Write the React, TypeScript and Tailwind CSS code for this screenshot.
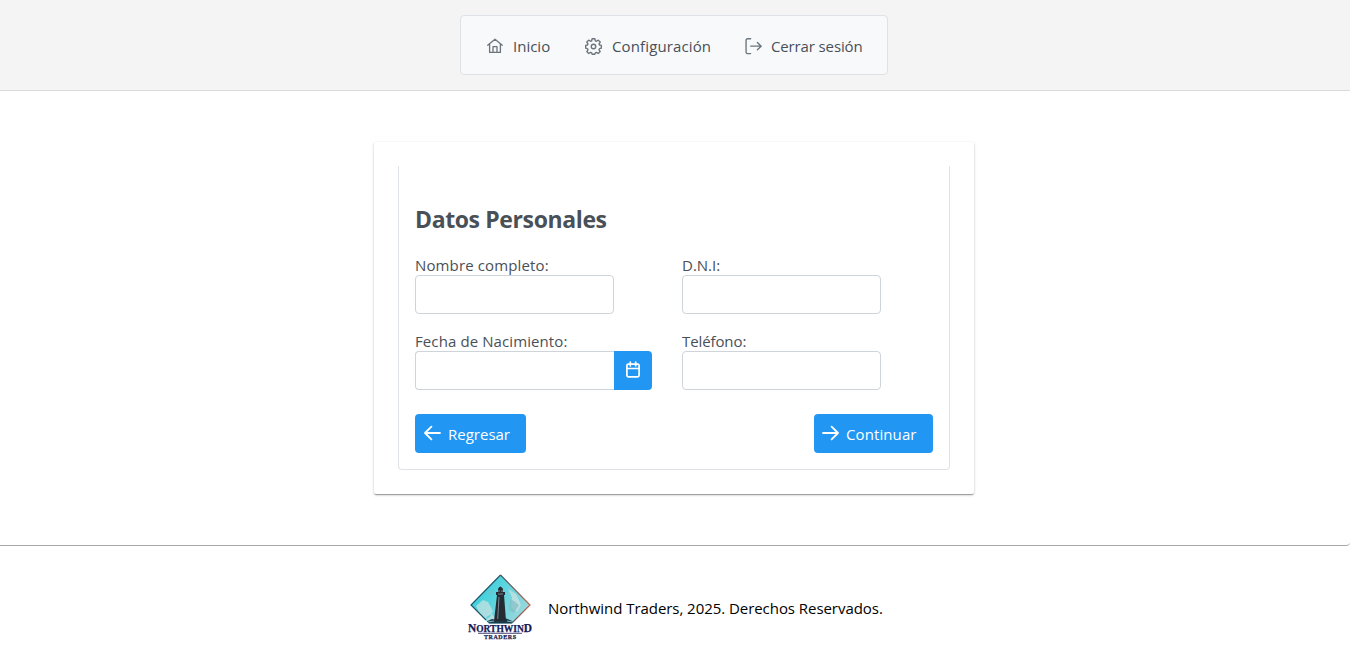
import type { ReactNode } from 'react';

function Icon({ children, className = 'size-4' }: { children: ReactNode; className?: string }) {
  return (
    <svg viewBox="0 0 16 16" fill="none" stroke="currentColor" strokeWidth="1.3" strokeLinecap="round" strokeLinejoin="round" className={`${className} shrink-0`}>
      {children}
    </svg>
  );
}

const HomeIcon = () => (
  <Icon>
    <path d="M.7 7.2 8 1.2l7.3 6M2.6 6v8.4h10.8V6M6 14.3V8.7h4v5.6" />
  </Icon>
);

const CogIcon = () => (
  <Icon className="size-[17px]">
    <path d="M6.7.7h2.6l.4 1.9 1.1.5 1.7-1.1 1.8 1.8-1.1 1.7.5 1.1 1.7.4v2.6l-1.7.4-.5 1.1 1.1 1.7-1.8 1.8-1.7-1.1-1.1.5-.4 1.3H6.7l-.4-1.3-1.1-.5-1.7 1.1-1.8-1.8 1.1-1.7-.5-1.1L.6 9.6V7l1.7-.4.5-1.1-1.1-1.7L3.5 2l1.7 1.1 1.1-.5z" />
    <circle cx="8" cy="8" r="2.1" />
  </Icon>
);

const SignOutIcon = () => (
  <Icon className="size-[17px]">
    <path d="M5.3.7H2.5C1.5.7 1 1.2 1 2.2v11c0 1 .5 1.5 1.5 1.5h2.8M5.4 7.7h9.7M11.7 4.3l3.5 3.4-3.5 3.4" />
  </Icon>
);

const CalendarIcon = () => (
  <svg viewBox="0 0 14 17" fill="none" stroke="currentColor" strokeWidth="1.7" strokeLinecap="round" strokeLinejoin="round" className="mb-[2px] h-[17px] w-[14px]">
    <rect x=".9" y="3.2" width="12.2" height="12.6" rx="1.5" />
    <path d="M1 7.5h12M4.3 1v3.8M9.7 1v3.8" />
  </svg>
);

const ArrowIcon = ({ left = false }: { left?: boolean }) => (
  <svg viewBox="0 0 17 16" fill="none" stroke="currentColor" strokeWidth="1.8" strokeLinecap="round" strokeLinejoin="round" className="mb-[2px] h-4 w-[17px] shrink-0">
    <path d={left ? 'M16 8H1.2M7.4 1.7 1 8l6.4 6.3' : 'M1 8h14.8M9.6 1.7 16 8l-6.4 6.3'} />
  </svg>
);

function Logo() {
  return (
    <svg viewBox="0 0 64 66" className="h-[66px] w-16">
      <defs>
        <linearGradient id="sky" x1="0" y1="0" x2="1" y2=".6">
          <stop offset="0" stopColor="#20cbd2" />
          <stop offset=".45" stopColor="#55d4df" />
          <stop offset="1" stopColor="#a5d8dd" />
        </linearGradient>
        <linearGradient id="edge">
          <stop offset=".4" stopColor="#205568" />
          <stop offset="1" stopColor="#bd6550" />
        </linearGradient>
        <clipPath id="diamond">
          <path d="M32.5 1 62 31 44 49.5H21L3 31z" />
        </clipPath>
      </defs>
      <g clipPath="url(#diamond)">
        <path d="M0 0h64v62H0z" fill="url(#sky)" />
        <path d="m8 32 7-6 5 2 5 9-3 6-7 4zM40 15l4 8-1 10 6 5 4-7-5-11zM24 40l-6 3 2 5 8-3z" fill="#d7e3e2" opacity=".65" />
        <path d="m42 25 4 2 5 4-5 8-5-3zM20 18l5-2-1 6z" fill="#80bdc4" opacity=".7" />
        <path d="m15 49 9-4 5 1 8-2 12 5-9 5H24z" fill="#1b3b4d" />
        <path d="m20 48 6-1M39 47l6 1" stroke="#7db8bd" />
      </g>
      <path d="M32.5 1 62 31 45 48M18 46 3 31 32.5 1" fill="none" stroke="url(#edge)" strokeWidth="1.2" />
      <path d="M30 15q2-5 5 0v3h2v3h-1l2 26H26l3-26h-1v-3h2z" fill="#242b33" />
      <path d="M31 16v2m3-2v2M31 23l-1.3 22M30 20h5" stroke="#84939c" strokeWidth=".9" />
      <text x="0" y="58" textLength="64" lengthAdjust="spacingAndGlyphs" fill="#171956" stroke="#171956" strokeWidth=".25" className="font-['Liberation_Serif',serif] text-[10px] font-bold">
        <tspan className="text-[12px]">N</tspan>ORTHWIN<tspan className="text-[12px]">D</tspan>
      </text>
      <path d="M10 59.3h44" stroke="#34346d" strokeWidth=".9" />
      <text x="16" y="65" textLength="32" fill="#24234d" stroke="#24234d" strokeWidth=".25" className="font-['Liberation_Serif',serif] text-[6px] font-bold">TRADERS</text>
    </svg>
  );
}

function Field({ label, labelClass, calendar = false }: { label: string; labelClass: string; calendar?: boolean }) {
  return (
    <div className="flex flex-col">
      <label className="flex h-[19px] flex-col whitespace-nowrap leading-[19px]">
        <span className={labelClass}>{label}</span>
      </label>
      <div className="flex h-[39px]">
        <input aria-label={label} className={`h-full w-[199px] border border-[#ced4da] bg-white px-3 outline-none ${calendar ? 'rounded-l border-r-0' : 'rounded'}`} />
        {calendar && (
          <button aria-label="Calendario" className="flex h-full w-[38px] items-center justify-center rounded-r bg-[#2196f3] text-white">
            <CalendarIcon />
          </button>
        )}
      </div>
    </div>
  );
}

export default function App() {
  return (
    <div className="flex h-[650px] flex-col overflow-hidden bg-white font-['Open_Sans','Noto_Sans',sans-serif] text-[15px] text-[#495057]">
      <header className="flex h-[91px] shrink-0 justify-center border-b border-[#d9dbdd] bg-[#f4f4f4] pt-[15px] pr-[2px]">
        <nav className="flex h-[60px] w-[428px] items-center rounded border border-[#dee2e6] bg-[#f8f9fa] pt-[2px] pl-[26px] whitespace-nowrap">
          <a className="flex w-[98px] items-center gap-[10px]"><span className="text-[#6c757d]"><HomeIcon /></span><span>Inicio</span></a>
          <a className="flex w-[160px] items-center gap-[10px]"><span className="text-[#6c757d]"><CogIcon /></span><span className="tracking-[0.13px]">Configuración</span></a>
          <a className="flex items-center gap-[9px]"><span className="text-[#6c757d]"><SignOutIcon /></span><span className="tracking-[-0.13px]">Cerrar sesión</span></a>
        </nav>
      </header>

      <main className="flex h-[455px] shrink-0 justify-center rounded-br border-b border-[#a5a7a9] pt-[51px] pr-[2px]">
        <section className="h-[352px] w-[600px] rounded-[2px] bg-white px-6 pt-6 shadow-[0_2px_1px_-1px_rgba(0,0,0,0.2),0_1px_1px_0_rgba(0,0,0,0.14),0_1px_3px_0_rgba(0,0,0,0.2)]">
          <form className="flex h-[304px] flex-col rounded-b border border-t-0 border-[#dee2e6] px-4 pt-[36px]">
            <h2 className="h-[34px] text-[23px] leading-[34px] font-bold whitespace-nowrap tracking-[-0.38px]">Datos Personales</h2>
            <div className="mt-5 grid grid-cols-[267px_1fr] gap-y-[18px]">
              <Field label="Nombre completo:" labelClass="tracking-[0.13px]" />
              <Field label="D.N.I:" labelClass="" />
              <Field label="Fecha de Nacimiento:" labelClass="tracking-[0.1px]" calendar />
              <Field label="Teléfono:" labelClass="tracking-[-0.1px]" />
            </div>
            <div className="mt-6 flex justify-between text-white">
              <button type="button" className="flex h-[39px] w-[111px] items-center gap-[7px] rounded bg-[#2196f3] pl-[9px]"><ArrowIcon left /><span className="pt-[2px]">Regresar</span></button>
              <button type="button" className="flex h-[39px] w-[119px] items-center gap-[7px] rounded bg-[#2196f3] pl-[8px]"><ArrowIcon /><span className="pt-[2px] tracking-[0.1px]">Continuar</span></button>
            </div>
          </form>
        </section>
      </main>

      <footer className="flex pt-[28px] pl-[468px] text-black">
        <Logo />
        <p className="ml-4 h-[66px] leading-[68px] tracking-[-0.05px] whitespace-nowrap">Northwind Traders, 2025. Derechos Reservados.</p>
      </footer>
    </div>
  );
}
